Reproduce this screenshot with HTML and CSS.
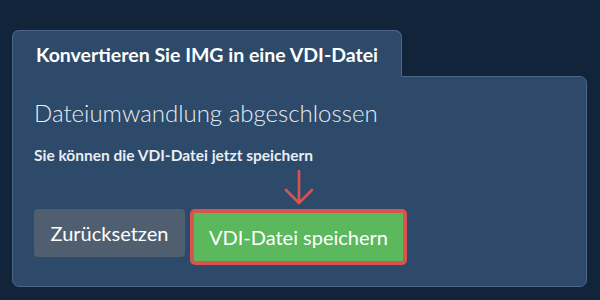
FILE: index.html
```html
<!DOCTYPE html>
<html>
<head>
<meta charset="utf-8">
<link rel="stylesheet" href="styles.css">
</head>
<body>
<div class="wrap">
  <div class="tab">Konvertieren Sie IMG in eine VDI-Datei</div>
  <div class="panel">
    <h2 class="title">Dateiumwandlung abgeschlossen</h2>
    <p class="note">Sie können die VDI-Datei jetzt speichern</p>
    <div class="actions">
      <button class="btn reset">Zurücksetzen</button>
      <div class="save-wrap">
        <svg class="arrow" width="32" height="36" viewBox="0 0 32 36"><path d="M16 1 V33 M3 20 L16 33 L29 20" fill="none" stroke="#d9534f" stroke-width="2.6" stroke-linecap="round" stroke-linejoin="round"/></svg>
        <button class="btn save">VDI-Datei speichern</button>
      </div>
    </div>
  </div>
</div>
</body>
</html>
```
FILE: styles.css
```css
html, body {
  margin: 0;
  padding: 0;
  background: #12243a;
  width: 600px;
  height: 300px;
  overflow: hidden;
  font-family: Lato, "Open Sans", sans-serif;
}
.wrap {
  padding: 30px 0 0 12px;
  width: 575px;
}
.tab {
  box-sizing: border-box;
  width: 390px;
  height: 47px;
  background: #2d4a6a;
  border: 1px solid #4b6688;
  border-bottom: none;
  border-radius: 7px 7px 0 0;
  color: #ffffff;
  font-weight: 700;
  font-size: 19.5px;
  line-height: 24px;
  padding: 12px 0 0 23px;
  position: relative;
  z-index: 1;
  margin-bottom: -1px;
}
.panel {
  box-sizing: border-box;
  height: 211px;
  background: #2d4a6a;
  border: 1px solid #4b6688;
  border-radius: 0 7px 7px 7px;
  padding: 21px 0 0 21px;
}
.title {
  margin: 0;
  font-weight: 300;
  font-size: 24px;
  color: #e8edf2;
  line-height: 30px;
}
.note {
  margin: 17px 0 0 0;
  font-weight: 700;
  font-size: 15.5px;
  color: #e8edf2;
  line-height: 20px;
}
.actions {
  display: flex;
  align-items: flex-start;
  gap: 5px;
  margin-top: 5px;
}
.save-wrap {
  display: flex;
  flex-direction: column;
  align-items: center;
}
.arrow {
  display: block;
  margin-bottom: 3px;
}
.btn {
  font-family: Lato, "Open Sans", sans-serif;
  font-size: 20px;
  color: #ffffff;
  border-radius: 4px;
  cursor: pointer;
}
.reset {
  margin-top: 39px;
  width: 151px;
  height: 48px;
  background: #4f5f70;
  border: none;
  padding: 0;
}
.save {
  box-sizing: border-box;
  width: 217px;
  height: 56px;
  background: #5cb85c;
  border: 4px solid #d9534f;
  border-radius: 5px;
  padding: 0;
}
```
